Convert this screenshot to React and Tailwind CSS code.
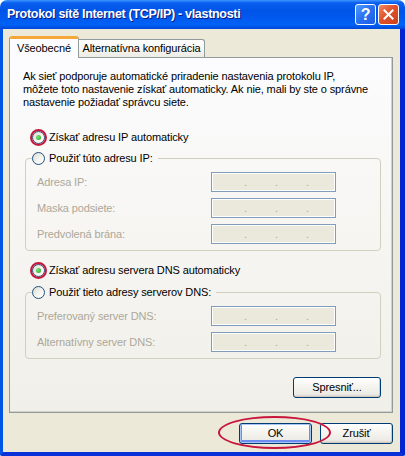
import React from 'react';

// Windows XP "Protokol sítě Internet (TCP/IP)" dialog

const Radio = ({ checked, marked }) => (
  <span className="relative inline-flex w-[13px] h-[13px] shrink-0 items-center justify-center rounded-full border border-[#1c5180] bg-[linear-gradient(135deg,#dcdcd3_0%,#f4f4f0_55%,#ffffff_100%)]">
    {checked && (
      <span className="w-[5px] h-[5px] rounded-full bg-[radial-gradient(circle_at_35%_35%,#7ee27a,#21a121)]" />
    )}
    {marked && (
      <span className="absolute -inset-[3px] rounded-full border-2 border-[#c8163c]" />
    )}
  </span>
);

const RadioRow = ({ label, checked, marked }) => (
  <div className="flex items-center h-[14px] gap-[4px]">
    <Radio checked={checked} marked={marked} />
    <span className="leading-[14px] text-black">{label}</span>
  </div>
);

const IpBox = () => (
  <div className="w-[125px] h-[20px] border border-[#7f9db9] bg-[#ebe9db] shadow-[inset_0_0_0_1px_#ffffff] flex items-end pb-[3px] pl-[32px] gap-[28px] text-[11px] leading-none text-[#aca899]">
    <span>.</span>
    <span>.</span>
    <span>.</span>
  </div>
);

const FieldRow = ({ label }) => (
  <div className="flex items-center h-[20px]">
    <span className="w-[185px] pl-[11px] text-[#aca899]">{label}</span>
    <IpBox />
  </div>
);

const Group = ({ legend, rows }) => (
  <fieldset className="w-[356px] border border-[#d0d0bf] rounded-[4px] p-0 m-0 pb-[6px]">
    <legend className="ml-[6px] pr-[5px] p-0">
      <RadioRow label={legend} />
    </legend>
    <div className="flex flex-col gap-[6px] mt-[7px]">
      {rows.map((r) => (
        <FieldRow key={r} label={r} />
      ))}
    </div>
  </fieldset>
);

const XpButton = ({ children, primary, className = '' }) => (
  <button
    className={`h-[21px] rounded-[3px] border border-[#003c74] text-[11px] text-black bg-[linear-gradient(to_bottom,#ffffff_0%,#f6f5f1_40%,#ecebe5_85%,#d6d0c5_100%)] ${
      primary
        ? 'shadow-[inset_0_0_0_1px_#a8c6f5,inset_0_-1px_0_2px_#6d8ef0]'
        : 'shadow-[inset_-1px_-1px_0_#d0cbbe]'
    } ${className}`}
  >
    {children}
  </button>
);

const App = () => {
  return (
    <div className="w-[405px] h-[456px] bg-white font-['Liberation_Sans',Arial,sans-serif] text-[11px] tracking-[-0.12px]">
      <div className="w-[405px] h-[456px] flex flex-col">
        {/* title bar */}
        <div className="h-[29px] shrink-0 rounded-t-[7px] flex items-center pl-[7px] pr-[6px] bg-[linear-gradient(to_bottom,#3d95ff_0%,#0a5ff0_10%,#0054e6_35%,#0058ee_60%,#0062f6_85%,#0047d8_100%)]">
          <span className="flex-1 text-white font-bold text-[12.5px] tracking-[-0.3px] [text-shadow:1px_1px_0_#0a1a80]">
            Protokol sítě Internet (TCP/IP) - vlastnosti
          </span>
          <div className="flex items-center gap-[2px]">
            <div className="w-[21px] h-[21px] rounded-[3px] border border-white bg-[linear-gradient(135deg,#4f9cff_0%,#2a6ff0_50%,#1c5ee6_100%)] flex items-center justify-center text-white font-bold text-[16px] leading-none">
              ?
            </div>
            <div className="w-[21px] h-[21px] rounded-[3px] border border-white bg-[linear-gradient(135deg,#f08a64_0%,#e0522c_45%,#c9401c_100%)] flex items-center justify-center">
              <svg width="11" height="11" viewBox="0 0 11 11">
                <path d="M1.5 1.5 L9.5 9.5 M9.5 1.5 L1.5 9.5" stroke="#fff" strokeWidth="2" strokeLinecap="square" />
              </svg>
            </div>
          </div>
        </div>

        {/* window body */}
        <div className="flex-1 flex flex-col bg-[#ece9d8] border-l-[3px] border-l-[#0055e5] border-r-[5px] border-r-[#0025d0] border-b-[4px] border-b-[#0831d9] rounded-b-[2px]">
          {/* tabs */}
          <div className="flex items-end ml-[6px] mt-[7px] h-[21px] relative z-10">
            <div className="w-[70px] h-[22px] -mb-px bg-[#fcfcfe] border border-[#919b9c] border-b-0 border-t-[3px] border-t-[#f5a83a] rounded-t-[3px] flex items-center justify-center text-black">
              Všeobecné
            </div>
            <div className="w-[126px] h-[18px] bg-[linear-gradient(to_bottom,#ffffff_0%,#f7f7f4_50%,#ecebe5_100%)] border border-[#919b9c] border-b-0 border-l-0 rounded-tr-[3px] flex items-center justify-center text-black">
              Alternatívna konfigurácia
            </div>
          </div>

          {/* tab panel */}
          <div className="w-[384px] h-[356px] ml-[6px] border border-[#919b9c] shadow-[inset_-1px_-1px_0_#d4d0c8] bg-[linear-gradient(to_bottom,#fcfcfe_0%,#f7f6f3_45%,#f1efe9_100%)] pl-[13px] pt-[12px] flex flex-col">
            <p className="leading-[13px] text-black">
              Ak sieť podporuje automatické priradenie nastavenia protokolu IP,
              <br />
              môžete toto nastavenie získať automaticky. Ak nie, mali by ste o správne
              <br />
              nastavenie požiadať správcu siete.
            </p>

            <div className="ml-[9px] mt-[21px]">
              <RadioRow label="Získať adresu IP automaticky" checked marked />
            </div>

            <div className="ml-[2px] mt-[7px]">
              <Group
                legend="Použiť túto adresu IP:"
                rows={['Adresa IP:', 'Maska podsiete:', 'Predvolená brána:']}
              />
            </div>

            <div className="ml-[9px] mt-[12px]">
              <RadioRow label="Získať adresu servera DNS automaticky" checked marked />
            </div>

            <div className="ml-[2px] mt-[8px]">
              <Group
                legend="Použiť tieto adresy serverov DNS:"
                rows={['Preferovaný server DNS:', 'Alternatívny server DNS:']}
              />
            </div>

            <div className="ml-[2px] w-[356px] mt-[18px] flex justify-end">
              <XpButton className="w-[88px]">Spresniť...</XpButton>
            </div>
          </div>

          {/* dialog buttons */}
          <div className="flex justify-end gap-[8px] pr-[7px] mt-[10px]">
            <div className="relative">
              <XpButton primary className="w-[73px]">OK</XpButton>
              <span className="absolute left-[-21px] top-[-7px] w-[113px] h-[33px] rounded-[50%] border-2 border-[#c8163c] pointer-events-none" />
            </div>
            <XpButton className="w-[73px]">Zrušiť</XpButton>
          </div>
        </div>
      </div>
    </div>
  );
};

export default App;
